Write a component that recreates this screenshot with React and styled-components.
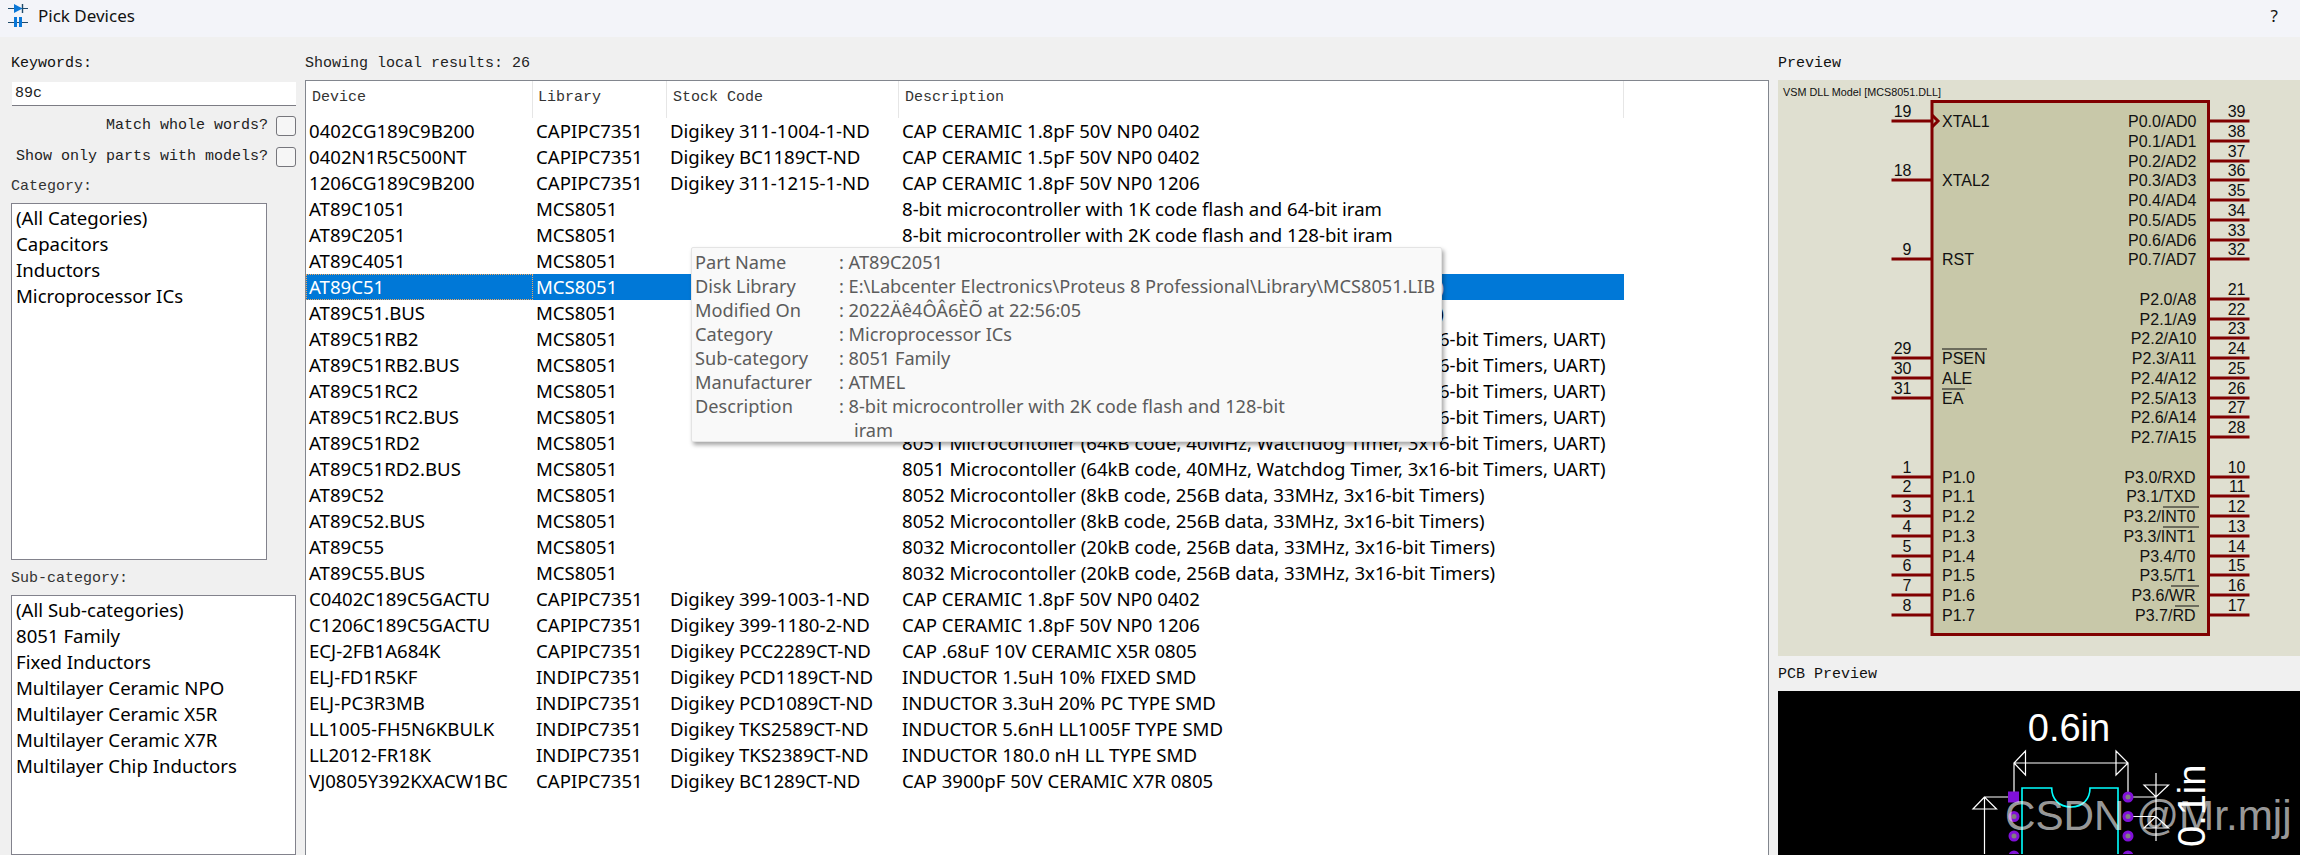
import React from "react";
import styled, { createGlobalStyle } from "styled-components";

const Global = createGlobalStyle`
  html, body { margin: 0; padding: 0; height: 855px; overflow: hidden; background: #f0f0f0; }
  * { box-sizing: border-box; }
`;
const UI = `"Noto Sans", "Open Sans", sans-serif`;
const MONO = `"Liberation Mono", monospace`;

const Window = styled.div`width: 2300px; height: 855px; display: flex; flex-direction: column; overflow: hidden; background: #f0f0f0; font-family: ${UI}; color: #000;`;
const TitleBar = styled.header`height: 37px; flex: none; display: flex; align-items: center; gap: 10px; padding: 0 22px 6px 8px; background: #f3f4f9; font-size: 17px; line-height: 24px; color: #111;`;
const TitleText = styled.span`flex: 1;`;
const Body = styled.main`flex: 1; min-height: 0; display: flex;`;
const LeftCol = styled.section`width: 305px; flex: none; padding: 16px 9px 0 11px; display: flex; flex-direction: column;`;
const MidCol = styled.section`flex: 1; min-width: 0; padding-top: 16px; display: flex; flex-direction: column;`;
const RightCol = styled.section`width: 522px; flex: none; margin-left: 9px; padding-top: 16px; display: flex; flex-direction: column;`;
const Label = styled.div`font: 15px/22px ${MONO}; height: 22px; white-space: pre; margin-top: ${p => p.$mt || 0}px; color: ${p => p.$c || "#111"};`;
const Input = styled.div`margin: 7px 0 0 1px; height: 24px; background: #fff; border-bottom: 1px solid #7c7c84; font: 15px/23px ${MONO}; padding-left: 3px; color: #222;`;
const CheckRow = styled.div`display: flex; justify-content: flex-end; align-items: center; gap: 8px; height: 20px; margin-top: ${p => p.$mt}px; font: 15px/20px ${MONO}; color: #222;`;
const Check = styled.span`width: 20px; height: 20px; border: 1px solid #76767c; border-radius: 3px; background: #f6f6f6;`;
const ListBox = styled.ul`list-style: none; margin: 5px 0 0; padding: 1px 0 0 4px; width: ${p => p.$w}px; height: ${p => p.$h}px; background: #fff; border: 1px solid #82828c; font-size: 18.6px; line-height: 26px; flex: none;`;
const TableBox = styled.div`position: relative; margin-top: 5px; flex: 1; background: #fff; border: 1px solid #82868e; border-bottom: 0; overflow: hidden;`;
const COLS = `227px 134px 232px 725px`;
const HeadRow = styled.div`display: grid; grid-template-columns: ${COLS}; height: 37px;`;
const HeadCell = styled.div`font: 15px/33px ${MONO}; color: #333; padding-left: ${p => p.$pl}px; border-right: 1px solid #e6e6e6;`;
const Row = styled.div`display: grid; grid-template-columns: ${COLS}; height: 26px; width: 1318px; font-size: 18.6px; line-height: 25px; white-space: nowrap; background: ${p => p.$sel ? "#0078d7" : "transparent"}; color: ${p => p.$sel ? "#fff" : "#000"};`;
const Cell = styled.div`padding-left: ${p => p.$pl}px; outline: ${p => p.$focus ? "1px dotted #f0a860" : "none"}; outline-offset: -1px;`;
const Tip = styled.aside`position: absolute; left: 385px; top: 166px; width: 751px; height: 195px; padding: 2px 0 0 3px; background: #f9f9f9; border: 1px solid #e4e4e4; border-radius: 2px; box-shadow: 2px 3px 4px rgba(0,0,0,.35); color: #5c5c5c; font-size: 18.2px; line-height: 24px;`;
const TipRow = styled.div`display: grid; grid-template-columns: 144px 1fr; white-space: nowrap;`;
const TipMore = styled.div`padding-left: 159px;`;
const Preview = styled.div`height: 576px; margin-top: 5px; background: #dfdfd0; flex: none;`;
const Pcb = styled.div`margin-top: 5px; flex: 1; background: #000; overflow: hidden;`;
const Drawing = styled.svg`display: block; width: 522px; height: ${p => p.$h}px;`;

const rows = [
  ["0402CG189C9B200","CAPIPC7351","Digikey 311-1004-1-ND","CAP CERAMIC 1.8pF 50V NP0 0402"],
  ["0402N1R5C500NT","CAPIPC7351","Digikey BC1189CT-ND","CAP CERAMIC 1.5pF 50V NP0 0402"],
  ["1206CG189C9B200","CAPIPC7351","Digikey 311-1215-1-ND","CAP CERAMIC 1.8pF 50V NP0 1206"],
  ["AT89C1051","MCS8051","","8-bit microcontroller with 1K code flash and 64-bit iram"],
  ["AT89C2051","MCS8051","","8-bit microcontroller with 2K code flash and 128-bit iram"],
  ["AT89C4051","MCS8051","","8-bit microcontroller with 4K code flash and 128-bit iram"],
  ["AT89C51","MCS8051","","8051 Microcontoller (4kB code, 33MHz, 2x16-bit Timers, UART)"],
  ["AT89C51.BUS","MCS8051","","8051 Microcontoller (4kB code, 33MHz, 2x16-bit Timers, UART)"],
  ["AT89C51RB2","MCS8051","","8051 Microcontoller (16kB code, 40MHz, Watchdog Timer, 3x16-bit Timers, UART)"],
  ["AT89C51RB2.BUS","MCS8051","","8051 Microcontoller (16kB code, 40MHz, Watchdog Timer, 3x16-bit Timers, UART)"],
  ["AT89C51RC2","MCS8051","","8051 Microcontoller (32kB code, 40MHz, Watchdog Timer, 3x16-bit Timers, UART)"],
  ["AT89C51RC2.BUS","MCS8051","","8051 Microcontoller (32kB code, 40MHz, Watchdog Timer, 3x16-bit Timers, UART)"],
  ["AT89C51RD2","MCS8051","","8051 Microcontoller (64kB code, 40MHz, Watchdog Timer, 3x16-bit Timers, UART)"],
  ["AT89C51RD2.BUS","MCS8051","","8051 Microcontoller (64kB code, 40MHz, Watchdog Timer, 3x16-bit Timers, UART)"],
  ["AT89C52","MCS8051","","8052 Microcontoller (8kB code, 256B data, 33MHz, 3x16-bit Timers)"],
  ["AT89C52.BUS","MCS8051","","8052 Microcontoller (8kB code, 256B data, 33MHz, 3x16-bit Timers)"],
  ["AT89C55","MCS8051","","8032 Microcontoller (20kB code, 256B data, 33MHz, 3x16-bit Timers)"],
  ["AT89C55.BUS","MCS8051","","8032 Microcontoller (20kB code, 256B data, 33MHz, 3x16-bit Timers)"],
  ["C0402C189C5GACTU","CAPIPC7351","Digikey 399-1003-1-ND","CAP CERAMIC 1.8pF 50V NP0 0402"],
  ["C1206C189C5GACTU","CAPIPC7351","Digikey 399-1180-2-ND","CAP CERAMIC 1.8pF 50V NP0 1206"],
  ["ECJ-2FB1A684K","CAPIPC7351","Digikey PCC2289CT-ND","CAP .68uF 10V CERAMIC X5R 0805"],
  ["ELJ-FD1R5KF","INDIPC7351","Digikey PCD1189CT-ND","INDUCTOR 1.5uH 10% FIXED SMD"],
  ["ELJ-PC3R3MB","INDIPC7351","Digikey PCD1089CT-ND","INDUCTOR 3.3uH 20% PC TYPE SMD"],
  ["LL1005-FH5N6KBULK","INDIPC7351","Digikey TKS2589CT-ND","INDUCTOR 5.6nH LL1005F TYPE SMD"],
  ["LL2012-FR18K","INDIPC7351","Digikey TKS2389CT-ND","INDUCTOR 180.0 nH LL TYPE SMD"],
  ["VJ0805Y392KXACW1BC","CAPIPC7351","Digikey BC1289CT-ND","CAP 3900pF 50V CERAMIC X7R 0805"],
];
const tip = [
  ["Part Name","AT89C2051"],
  ["Disk Library","E:\\Labcenter Electronics\\Proteus 8 Professional\\Library\\MCS8051.LIB"],
  ["Modified On","2022Äê4ÔÂ6ÈÕ at 22:56:05"],
  ["Category","Microprocessor ICs"],
  ["Sub-category","8051 Family"],
  ["Manufacturer","ATMEL"],
  ["Description","8-bit microcontroller with 2K code flash and 128-bit"],
];

const leftPins = [
  [121,"19","XTAL1"],[180,"18","XTAL2"],[259,"9","RST"],
  [358,"29","PSEN",1987],[378,"30","ALE"],[398,"31","EA",1965],
  [477,"1","P1.0"],[496,"2","P1.1"],[516,"3","P1.2"],[536,"4","P1.3"],
  [556,"5","P1.4"],[575,"6","P1.5"],[595,"7","P1.6"],[615,"8","P1.7"],
];
const rightPins = [
  [121,"39","P0.0/AD0"],[141,"38","P0.1/AD1"],[161,"37","P0.2/AD2"],[180,"36","P0.3/AD3"],
  [200,"35","P0.4/AD4"],[220,"34","P0.5/AD5"],[240,"33","P0.6/AD6"],[259,"32","P0.7/AD7"],
  [299,"21","P2.0/A8"],[319,"22","P2.1/A9"],[338,"23","P2.2/A10"],[358,"24","P2.3/A11"],
  [378,"25","P2.4/A12"],[398,"26","P2.5/A13"],[417,"27","P2.6/A14"],[437,"28","P2.7/A15"],
  [477,"10","P3.0/RXD"],[496,"11","P3.1/TXD"],[516,"12","P3.2/INT0",2163],[536,"13","P3.3/INT1",2163],
  [556,"14","P3.4/T0"],[575,"15","P3.5/T1"],[595,"16","P3.6/WR",2171],[615,"17","P3.7/RD",2175],
];
const M = "#800000";
const chipText = { fontFamily: "Liberation Sans", fontSize: 16, fill: "#111" };

function Schematic() {
  return (
    <Drawing $h={576} viewBox="1778 80 522 576">
      <text x="1783" y="96" fontFamily="Liberation Sans" fontSize="10.8" fill="#111">VSM DLL Model [MCS8051.DLL]</text>
      <rect x="1932" y="101.5" width="276.5" height="533" fill="#c8c8a9" stroke={M} strokeWidth="3" />
      {leftPins.map(([y, n, t, over]) => (
        <g key={n} style={chipText}>
          <line x1="1891.5" x2="1932" y1={y} y2={y} stroke={M} strokeWidth="3" />
          <text x="1911.5" y={y - 4} textAnchor="end">{n}</text>
          <text x="1942" y={y + 6}>{t}</text>
          {over && <line x1="1942" x2={over} y1={y - 9} y2={y - 9} stroke="#111" strokeWidth="1" />}
        </g>
      ))}
      <path d="M1932 115 L1938 121 L1932 127" fill="none" stroke={M} strokeWidth="3" />
      {rightPins.map(([y, n, t, over]) => (
        <g key={n} style={chipText}>
          <line x1="2208" x2="2249.5" y1={y} y2={y} stroke={M} strokeWidth="3" />
          <text x="2245.5" y={y - 4} textAnchor="end">{n}</text>
          <text x={y > 470 ? 2195.5 : 2196.5} y={y + 6} textAnchor="end">{t}</text>
          {over && <line x1={over} x2="2199" y1={y - 9} y2={y - 9} stroke="#111" strokeWidth="1" />}
        </g>
      ))}
    </Drawing>
  );
}

function Pcblayout() {
  const W = "#fff";
  const pads = [798, 817.5, 837, 857];
  return (
    <Drawing $h={163} viewBox="1778 692 522 163">
      <text x="2069" y="742" textAnchor="middle" fontFamily="Liberation Sans" fontSize="38" fill={W}>0.6in</text>
      <g fill="none" stroke={W} strokeWidth="1.2">
        <path d="M2014 764H2128 M2014 764V798 M2128 764V798 M2025.5 752L2014 764L2025.5 776Z M2116 752L2128 764L2116 776Z" />
        <path d="M1984.5 798H2014 M1984.5 798V855 M1984.5 798L1973 810H1996.5Z" />
        <path d="M2128 798H2156 M2128 817.5H2156 M2156 774V842 M2144 786H2168.5L2156 798Z M2144 829H2168.5L2156 817.5Z" />
      </g>
      <path d="M2022 855V789H2051.7C2051.7 800 2059 808 2071 808C2083 808 2090 800 2090 789H2118V855" fill="none" stroke="#00ffff" strokeWidth="1.6" />
      {pads.map((y, i) => (
        <g key={y}>
          {i === 0
            ? <rect x="2008" y={y - 5.5} width="11" height="11" fill="#8010d8" />
            : <circle cx="2014" cy={y} r="4" fill="#808080" stroke="#8010d8" strokeWidth="3" />}
          <circle cx="2128" cy={y} r="4" fill="#808080" stroke="#8010d8" strokeWidth="3" />
        </g>
      ))}
      <text transform="translate(2205 848) rotate(-90)" fontFamily="Liberation Sans" fontSize="38" fill={W}>0.1in</text>
      <text x="2005" y="831" fontFamily="Liberation Sans" fontSize="42.2" fill="rgba(255,255,255,.62)">CSDN @Mr.mjj</text>
    </Drawing>
  );
}

function AppIcon() {
  return (
    <svg width="20" height="26" viewBox="0 0 20 26">
      <path d="M0 5.5H20 M0 19.5H20" stroke="#1f4a6a" strokeWidth="1.2" />
      <path d="M14.5 1V10" stroke="#1f4a6a" strokeWidth="1.4" />
      <path d="M6 1L14.5 5.5L6 10Z" fill="#0a78d8" />
      <rect x="6" y="14" width="3" height="10" fill="#0a78d8" />
      <rect x="11" y="14" width="3" height="10" fill="#0a78d8" />
    </svg>
  );
}

export default function App() {
  return (
    <Window>
      <Global />
      <TitleBar><AppIcon /><TitleText>Pick Devices</TitleText><span>?</span></TitleBar>
      <Body>
        <LeftCol>
          <Label>Keywords:</Label>
          <Input>89c</Input>
          <CheckRow $mt={10}>Match whole words?<Check /></CheckRow>
          <CheckRow $mt={11}>Show only parts with models?<Check /></CheckRow>
          <Label $mt={9} $c="#333">Category:</Label>
          <ListBox $w={256} $h={357}>
            {["(All Categories)","Capacitors","Inductors","Microprocessor ICs"].map(t => <li key={t}>{t}</li>)}
          </ListBox>
          <Label $mt={8} $c="#333">Sub-category:</Label>
          <ListBox $w={285} $h={260}>
            {["(All Sub-categories)","8051 Family","Fixed Inductors","Multilayer Ceramic NPO","Multilayer Ceramic X5R","Multilayer Ceramic X7R","Multilayer Chip Inductors"].map(t => <li key={t}>{t}</li>)}
          </ListBox>
        </LeftCol>
        <MidCol>
          <Label $c="#222">{"Showing local results: 26"}</Label>
          <TableBox>
            <HeadRow>
              <HeadCell $pl={6}>Device</HeadCell>
              <HeadCell $pl={5}>Library</HeadCell>
              <HeadCell $pl={6}>Stock Code</HeadCell>
              <HeadCell $pl={6}>Description</HeadCell>
            </HeadRow>
            {rows.map(r => {
              const sel = r[0] === "AT89C51";
              return (
                <Row key={r[0]} $sel={sel}>
                  <Cell $pl={3} $focus={sel}>{r[0]}</Cell>
                  <Cell $pl={3}>{r[1]}</Cell>
                  <Cell $pl={3}>{r[2]}</Cell>
                  <Cell $pl={3}>{r[3]}</Cell>
                </Row>
              );
            })}
            <Tip>
              {tip.map(([k, v]) => <TipRow key={k}><span>{k}</span><span>: {v}</span></TipRow>)}
              <TipMore>iram</TipMore>
            </Tip>
          </TableBox>
        </MidCol>
        <RightCol>
          <Label>Preview</Label>
          <Preview><Schematic /></Preview>
          <Label $mt={8}>PCB Preview</Label>
          <Pcb><Pcblayout /></Pcb>
        </RightCol>
      </Body>
    </Window>
  );
}
